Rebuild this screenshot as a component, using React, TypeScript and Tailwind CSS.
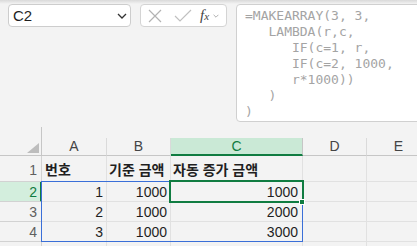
import React from "react";

const formula = `=MAKEARRAY(3, 3,
   LAMBDA(r,c,
      IF(c=1, r,
      IF(c=2, 1000,
      r*1000))
   )
)`;

const rows = [
  { n: 2, a: "1", b: "1000", c: "1000" },
  { n: 3, a: "2", b: "1000", c: "2000" },
  { n: 4, a: "3", b: "1000", c: "3000" },
];

function Chevron({ className }: { className?: string }) {
  return (
    <svg viewBox="0 0 10 6" className={className} fill="none" stroke="currentColor" strokeWidth="1.3">
      <path d="M1 1l4 4 4-4" />
    </svg>
  );
}

function FormulaArea() {
  return (
    <div className="flex h-[118px] items-start gap-[9px] pl-[8px]">
      <div className="flex h-[23px] w-[123px] shrink-0 items-center justify-between rounded-[4px] border border-[#cdcdcd] bg-white pl-[4px] pr-[3px]">
        <span className="text-[15px] leading-none text-[#1f1f1f]">C2</span>
        <Chevron className="h-[6px] w-[10px] text-[#333]" />
      </div>
      <div className="flex h-[23px] w-[87px] shrink-0 items-center rounded-[4px] border border-[#d4d4d4] bg-white pl-[7px]">
        <svg viewBox="0 0 14 14" className="h-[14px] w-[14px]" fill="none" stroke="#b3b3b3" strokeWidth="1.2">
          <path d="M1 1l12 12M13 1L1 13" />
        </svg>
        <svg viewBox="0 0 18 14" className="ml-[12px] h-[14px] w-[18px]" fill="none" stroke="#c0c0c0" strokeWidth="1.2">
          <path d="M1 7l5 5L17 1" />
        </svg>
        <span className="ml-[8px] font-['Liberation_Serif',serif] text-[15px] italic leading-none text-[#444]">
          f<span className="text-[11px]">x</span>
        </span>
        <Chevron className="ml-[4px] h-[4px] w-[6px] text-[#9a9a9a]" />
      </div>
      <div className="h-[118px] w-[200px] shrink-0 rounded-[4px] border border-[#d0d0d0] bg-white pl-[8px] pt-[3px]">
        <pre className="font-['DejaVu_Sans_Mono',monospace] text-[13px] leading-[16px] text-[#a4a4a4]">{formula}</pre>
      </div>
    </div>
  );
}

function Sheet() {
  const cell = "h-full shrink-0 border-r border-b border-[#e1e1e1]";
  const rh = "flex h-full w-[42px] shrink-0 items-end justify-end border-r border-b border-[#d2d2d2] bg-[#f3f3f3] pr-[4px] text-[14px] leading-[18px] text-[#5f5f5f]";
  return (
    <div className="relative mt-[5px] font-['Liberation_Sans','Noto_Sans_CJK_KR',sans-serif]">
      {/* column headers */}
      <div className="flex h-[29px]">
        <div className="flex h-full w-[42px] shrink-0 items-end justify-end border-r border-b border-[#c6c6c6] pb-[2px] pr-[2px]">
          <svg viewBox="0 0 12 10" className="h-[10px] w-[12px]">
            <path d="M12 0V10H0Z" fill="#bdbdbd" />
          </svg>
        </div>
        {[
          { k: "A", w: "w-[65px]" },
          { k: "B", w: "w-[64px]" },
          { k: "C", w: "w-[132px]" },
          { k: "D", w: "w-[64px]" },
          { k: "E", w: "w-[64px]" },
        ].map((c) => (
          <div key={c.k} className={`flex h-full shrink-0 flex-col ${c.w}`}>
            <div className="h-[11px]" />
            {c.k === "C" ? (
              <div className="flex h-[18px] items-center justify-center border-r border-b-2 border-r-[#c6c6c6] border-b-[#107c41] bg-[#cae9d6] text-[14px] text-[#107c41]">
                C
              </div>
            ) : (
              <div className="flex h-[18px] items-center justify-center border-r border-b border-r-[#dadada] border-b-[#c6c6c6] text-[14px] text-[#444]">
                {c.k}
              </div>
            )}
          </div>
        ))}
      </div>

      {/* row 1 */}
      <div className="flex h-[26px] text-[14px] font-bold leading-[20px] text-[#1f1f1f]">
        <div className={`${rh} pb-[2px] font-normal`}>1</div>
        <div className={`${cell} flex w-[65px] items-end pb-[1px] pl-[3px]`}>번호</div>
        <div className={`${cell} flex w-[64px] items-end pb-[1px] pl-[2px]`}>기준 금액</div>
        <div className={`${cell} flex w-[132px] items-end pb-[1px] pl-[2px]`}>자동 증가 금액</div>
        <div className={`${cell} w-[64px]`} />
        <div className={`${cell} w-[64px]`} />
      </div>

      {rows.map((r) => (
        <div key={r.n} className="flex h-[20px] text-[14px] leading-[18px] text-[#1f1f1f]">
          {r.n === 2 ? (
            <div className="flex h-full w-[42px] shrink-0 items-end justify-end border-r-2 border-b border-r-[#107c41] border-b-[#d2d2d2] bg-[#d3eedd] pr-[3px] text-[14px] leading-[18px] text-[#107c41]">
              2
            </div>
          ) : (
            <div className={rh}>{r.n}</div>
          )}
          <div className={`${cell} flex w-[65px] items-end justify-end pr-[3px]`}>{r.a}</div>
          <div className={`${cell} flex w-[64px] items-end justify-end pr-[3px]`}>{r.b}</div>
          <div className={`${cell} flex w-[132px] items-end justify-end pr-[4px]`}>{r.c}</div>
          <div className={`${cell} w-[64px]`} />
          <div className={`${cell} w-[64px]`} />
        </div>
      ))}

      <div className="flex h-[20px]">
        <div className={rh} />
        <div className={`${cell} w-[65px]`} />
        <div className={`${cell} w-[64px]`} />
        <div className={`${cell} w-[132px]`} />
        <div className={`${cell} w-[64px]`} />
        <div className={`${cell} w-[64px]`} />
      </div>

      {/* spill range */}
      <div className="pointer-events-none absolute left-[41px] top-[54px] h-[61px] w-[262px] border border-[#3a6fd8]" />
      {/* active cell */}
      <div className="pointer-events-none absolute left-[169px] top-[53px] h-[23px] w-[135px] border-2 border-[#107c41]" />
      <div className="pointer-events-none absolute left-[299px] top-[72px] h-[6px] w-[6px] border border-white bg-[#107c41]" />
    </div>
  );
}

export default function App() {
  return (
    <div className="relative h-[246px] w-[417px] overflow-hidden bg-[#f3f3f3] font-['Liberation_Sans','Noto_Sans_CJK_KR',sans-serif]">
      <div className="h-[4px] bg-gradient-to-b from-[#d9d9d9] to-[#f3f3f3]" />
      <FormulaArea />
      <Sheet />
    </div>
  );
}
